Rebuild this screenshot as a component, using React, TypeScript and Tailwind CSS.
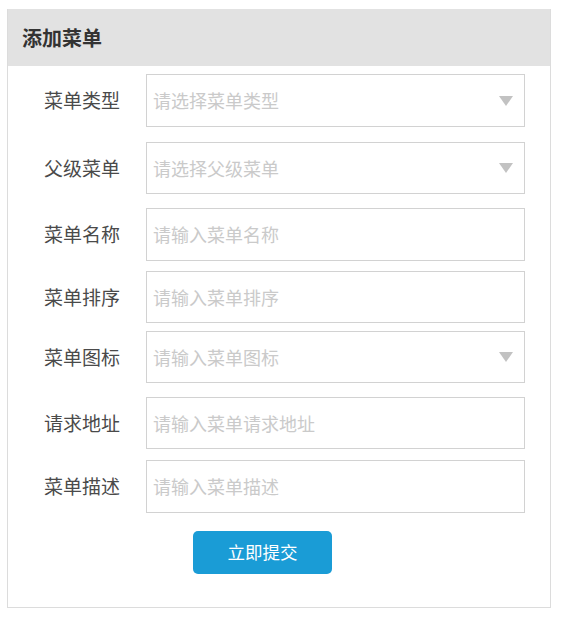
import React from 'react';

type Field = {
  label: string;
  placeholder: string;
  select?: boolean;
  gap: string;
  h: string;
};

const fields: Field[] = [
  { label: '菜单类型', placeholder: '请选择菜单类型', select: true, gap: 'mt-[8px]', h: 'h-[53px]' },
  { label: '父级菜单', placeholder: '请选择父级菜单', select: true, gap: 'mt-[15px]', h: 'h-[52px]' },
  { label: '菜单名称', placeholder: '请输入菜单名称', gap: 'mt-[14px]', h: 'h-[53px]' },
  { label: '菜单排序', placeholder: '请输入菜单排序', gap: 'mt-[10px]', h: 'h-[52px]' },
  { label: '菜单图标', placeholder: '请输入菜单图标', select: true, gap: 'mt-[8px]', h: 'h-[52px]' },
  { label: '请求地址', placeholder: '请输入菜单请求地址', gap: 'mt-[14px]', h: 'h-[52px]' },
  { label: '菜单描述', placeholder: '请输入菜单描述', gap: 'mt-[11px]', h: 'h-[53px]' },
];

function Row({ field }: { field: Field }) {
  return (
    <div className={`flex items-center ${field.gap}`}>
      <label className="w-[112px] shrink-0 text-right text-[19px] text-[#4a4a4a]">{field.label}</label>
      <div
        className={`ml-[26px] flex w-[379px] items-center border border-[#d2d2d2] bg-white pl-[6px] pr-[11px] ${field.h}`}
      >
        <input
          placeholder={field.placeholder}
          className="min-w-0 flex-1 bg-transparent text-[18px] text-[#333] outline-none placeholder:text-[#cacaca]"
        />
        {field.select && (
          <svg width="14" height="10" viewBox="0 0 14 10" className="shrink-0">
            <polygon points="0,0 14,0 7,10" fill="#c2c2c2" />
          </svg>
        )}
      </div>
    </div>
  );
}

export default function App() {
  return (
    <div
      className="min-h-screen bg-white pl-[7px] pt-[9px]"
      style={{ fontFamily: '"Noto Sans CJK SC", "Liberation Sans", sans-serif' }}
    >
      <div className="w-[544px] border border-t-0 border-[#dcdcdc] pb-[33px]">
        <div className="flex h-[57px] items-center bg-[#e2e2e2] pl-[14px]">
          <h1 className="text-[20px] font-bold text-[#333]">添加菜单</h1>
        </div>
        {fields.map((field) => (
          <Row key={field.label} field={field} />
        ))}
        <div className="mt-[18px] flex">
          <button className="ml-[185px] h-[43px] w-[139px] rounded-[5px] bg-[#1a9cd6] text-[17.5px] text-white">
            立即提交
          </button>
        </div>
      </div>
    </div>
  );
}
